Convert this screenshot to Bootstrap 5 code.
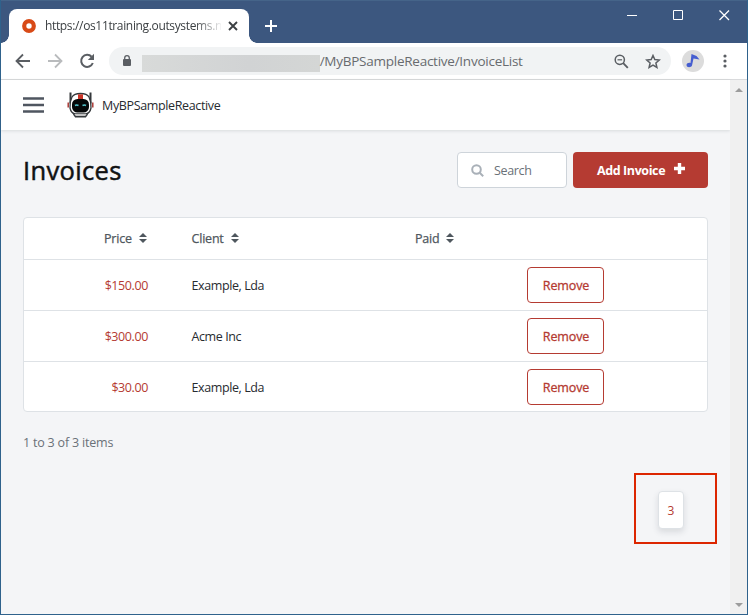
<!DOCTYPE html>
<html lang="en">
<head>
<meta charset="utf-8">
<meta name="viewport" content="width=device-width, initial-scale=1">
<title>Invoices</title>
<link href="https://cdn.jsdelivr.net/npm/bootstrap@5.3.0/dist/css/bootstrap.min.css" rel="stylesheet">
<style>
body{font-family:"Open Sans","Noto Sans",sans-serif;font-size:12.5px;line-height:20px;color:#272b30;overflow:hidden}
svg{display:block;flex:none}
.t{white-space:nowrap;display:block}
.browser{width:748px;height:615px;border:1px solid #2f628c;border-top:0;background:#fff}
.titlebar{height:43px;background:#3c577f;border-top:1px solid #456489;padding-left:8px}
.tab{width:240px;height:34px;margin-top:8px;background:#fff;border-radius:8px 8px 0 0;padding-left:13px}
.tab::before,.tab::after{content:"";position:absolute;bottom:0;width:8px;height:8px}
.tab::before{left:-8px;background:radial-gradient(circle at 0 0,#3c577f 7.5px,#fff 8px)}
.tab::after{right:-8px;background:radial-gradient(circle at 100% 0,#3c577f 7.5px,#fff 8px)}
.tab-title{width:176px;margin-left:9px;font-size:12px;letter-spacing:-.35px;color:#3c4043;-webkit-mask-image:linear-gradient(90deg,#000 150px,transparent 178px)}
.toolbar{height:37px;border-bottom:1px solid #d9dadc;padding:0 16px 0 14px}
.omnibox{width:562px;height:28px;margin-left:14px;border-radius:14px;background:#f1f3f4;padding:0 10px 0 12px}
.redacted{width:178px;height:17px;margin:4px 0 0 10px;background:linear-gradient(90deg,#d8dad9,#d1d3d4 60%,#d4d6d5)}
.path{width:295px;font-size:13.5px;color:#686b6f;letter-spacing:-.25px}
.avatar{width:22px;height:22px;background:#dcdcdc;margin-left:11px}
.page{width:729px;height:534px;background:#f4f5f7}
.app-header{height:50px;background:#fff;padding-left:22px;box-shadow:0 1px 3px rgba(70,80,90,.16)}
.brand-name{margin-left:8px;padding-top:2px;letter-spacing:-.36px}
.scroll{width:17px;height:534px;background:#f0f0f0;padding:8px 0 7px}
.content{padding:22px 22px 0}
h1{font-size:25.5px;line-height:36px;font-weight:500;color:#101213;letter-spacing:.35px;-webkit-text-stroke:.5px #101213}
.search{width:110px;height:36px;border:1px solid #ced4da;border-radius:4px;background:#fff;padding-left:13px;color:#6a7178;letter-spacing:-.35px}
.search .t{margin-left:10px;padding-top:2px}
.add{width:135px;height:36px;background:#b53b32;border-radius:4px;color:#fff;font-weight:700;font-size:12.5px;border:0;padding:1px 0 0 24px;letter-spacing:-.4px}
.add .t{padding-top:1px}
.grid-card{margin-top:29px;border:1px solid #dee2e6;border-radius:4px;background:#fff}
.grid-card table{table-layout:fixed;font-size:12.5px;--bs-table-bg:transparent;color:#272b30}
.grid-card th{height:41px;padding:0;font-weight:500;color:#4f575e;vertical-align:middle;border-color:#dee2e6;letter-spacing:-.2px;-webkit-text-stroke:.25px #4f575e}
.grid-card th .t{padding-top:2px}
.sort{margin-left:7px}
.grid-card td{height:51px;padding:0;vertical-align:middle;border-color:#dee2e6;letter-spacing:-.4px}
.grid-card td .t{padding-top:3px}
.grid-card tr:last-child td{border:0;height:50px;padding-top:1px}
.grid-card tr:last-child td .t{padding-top:2px}
.price{color:#b53b32;width:79px;margin-left:45px;text-align:right}
.remove{display:block;width:77px;height:36px;border:1px solid #b53b32;border-radius:4px;background:#fff;color:#b53b32;font-size:12.5px;line-height:20px;padding:3px 0 0 1px;letter-spacing:-.12px;-webkit-text-stroke:.3px #b53b32}
.counter{margin-top:21px;color:#6a7178;letter-spacing:-.2px}
.frame{width:83px;height:71px;border:2px solid #dc2600;margin:20px -9px 0 0;padding:0 0 0 22px}
.pager{width:26px;height:38px;margin-top:3px;border:1px solid #dee2e6;border-radius:4px;background:#fff;color:#b53b32;box-shadow:0 3px 6px rgba(50,60,70,.14);font-size:12px;padding-top:1px}
</style>
<script src="https://cdn.jsdelivr.net/npm/bootstrap@5.3.0/dist/js/bootstrap.bundle.min.js"></script>
</head>
<body>
<div class="browser">
 <div class="titlebar d-flex">
  <div class="tab position-relative d-flex align-items-center">
   <svg width="14" height="14"><circle cx="7" cy="7" r="4.8" fill="#fff" stroke="#d84a17" stroke-width="4.2"/></svg>
   <div class="tab-title"><span class="t">https://os11training.outsystems.n</span></div>
   <svg width="10" height="10" style="margin-left:7px"><path d="M1 1l8 8M9 1l-8 8" stroke="#3c4043" stroke-width="1.9"/></svg>
  </div>
  <svg width="14" height="14" style="margin:18px 0 0 15px"><path d="M7 1v12M1 7h12" stroke="#fff" stroke-width="2"/></svg>
  <div class="d-flex ms-auto" style="padding:9px 17px 0 0">
   <svg width="103" height="12" fill="none" stroke="#fff"><path d="M0 5.500h10M46.500 .5h9v9h-9z"/><path d="M92.500 .5l9.500 9.500M102 .5l-9.500 9.500" stroke-width="1.300"/></svg>
  </div>
 </div>
 <div class="toolbar d-flex align-items-center">
  <svg width="16" height="16" fill="none" stroke="#5a5e63" stroke-width="1.8"><path d="M15 8H2M8 1.500L1.500 8 8 14.500"/></svg>
  <svg width="16" height="16" class="ms-3" fill="none" stroke="#b9bbbd" stroke-width="1.800"><path d="M1 8h13M8 1.500L14.500 8 8 14.500"/></svg>
  <svg width="16" height="16" class="ms-3"><path d="M12.600 3.800A6 6 0 1 0 13.800 10" fill="none" stroke="#5a5e63" stroke-width="2"/><path d="M15 .8V7H8.800z" fill="#5a5e63"/></svg>
  <div class="omnibox d-flex align-items-center">
   <svg width="10" height="12" style="margin-left:1px"><rect x="1" y="4" width="8" height="7" rx="1" fill="#5a5e63"/><path d="M2.700 5V3a2.300 2.300 0 0 1 4.600 0v2" fill="none" stroke="#5a5e63" stroke-width="1.300"/></svg>
   <div class="redacted"></div>
   <div class="path"><span class="t">/MyBPSampleReactive/InvoiceList</span></div>
   <svg width="15" height="15" fill="none" stroke="#5a5e63"><circle cx="5.800" cy="5.800" r="4.600" stroke-width="1.500"/><path d="M9.200 9.200l4.600 4.600" stroke-width="1.900"/><path d="M3.500 5.800h4.600" stroke-width="1.200"/></svg>
   <svg width="16" height="15" style="margin-left:16px" fill="none" stroke="#5a5e63" stroke-width="1.500"><path d="M8 1.500l1.800 4.100 4.500.4-3.400 3 1 4.400L8 11.100l-3.900 2.300 1-4.400-3.400-3 4.500-.4z"/></svg>
  </div>
  <div class="avatar rounded-circle d-flex align-items-center justify-content-center">
   <svg width="16" height="16"><path d="M6.500 1l5 2 3 3.500-6-1L7 12.500c-.5 2-5.500 2.500-5.500-.5 0-2 2.500-2.500 4-2z" fill="#465ed0"/></svg>
  </div>
  <svg width="4" height="14" class="ms-auto me-1" fill="#5a5e63"><circle cx="2" cy="2" r="1.600"/><circle cx="2" cy="7" r="1.600"/><circle cx="2" cy="12" r="1.600"/></svg>
 </div>
 <div class="d-flex">
  <main class="page">
   <header class="app-header d-flex align-items-center">
    <svg width="21" height="16"><path d="M0 1.500h21M0 8h21M0 14.500h21" stroke="#4f5660" stroke-width="2.600"/></svg>
    <svg width="27" height="26" style="margin-left:23px" viewBox="0 0 27 26">
     <path d="M3.500 .5v11M23.500 .5v11" stroke="#34383b" stroke-width="2"/>
     <path d="M5 5Q7 1.500 13.500 1.500T22 5q2.500 5 2 11-1 5-5 6H8q-4-1-5-6-.500-6 2-11z" fill="#fff" stroke="#34383b" stroke-width="1.300"/>
     <path d="M11 2.300h5v5h-5z" fill="#c93427"/>
     <path d="M1.200 10.500v5M25.800 10.500v5" stroke="#a62e2a" stroke-width="1.400"/>
     <rect x="5" y="7" width="17" height="13.500" rx="5.500" fill="#050708"/>
     <path d="M8 13.500q1.500-1 3.500 0M15.500 13.500q2-1 3.500 0" stroke="#54c5ce" stroke-width="1.600" fill="none"/>
     <path d="M6.500 22l2 2.800h10l2-2.800" fill="#c4c4c4" stroke="#34383b" stroke-width="1.400"/>
    </svg>
    <span class="t brand-name">MyBPSampleReactive</span>
   </header>
   <div class="content">
    <div class="d-flex align-items-center">
     <h1 class="m-0"><span class="t">Invoices</span></h1>
     <div class="search ms-auto d-flex align-items-center">
      <svg width="13" height="13" fill="none" stroke="#a9b0b8" stroke-width="2"><circle cx="5.500" cy="5.500" r="4.300"/><path d="M8.700 8.700l3.500 3.500"/></svg>
      <span class="t">Search</span>
     </div>
     <button class="add btn d-flex align-items-center" style="margin-left:6px"><span class="t">Add Invoice</span><svg width="11" height="11" style="margin:-4px 0 0 9px"><path d="M5.500 0v11M0 5.500h11" stroke="#fff" stroke-width="3.400"/></svg></button>
    </div>
    <div class="grid-card">
     <table class="table mb-0">
      <colgroup><col style="width:80px"><col style="width:87.500px"><col style="width:223.500px"><col style="width:112px"><col></colgroup>
      <thead><tr>
       <th></th>
       <th><div class="d-flex align-items-center"><span class="t">Price</span><svg class="sort" width="8" height="10"><path d="M0 4l4-4 4 4zM0 6h8l-4 4z" fill="#4f575e"/></svg></div></th>
       <th><div class="d-flex align-items-center"><span class="t">Client</span><svg class="sort" width="8" height="10"><path d="M0 4l4-4 4 4zM0 6h8l-4 4z" fill="#4f575e"/></svg></div></th>
       <th><div class="d-flex align-items-center"><span class="t">Paid</span><svg class="sort" width="8" height="10"><path d="M0 4l4-4 4 4zM0 6h8l-4 4z" fill="#4f575e"/></svg></div></th>
       <th></th>
      </tr></thead>
      <tbody>
       <tr><td colspan="2"><span class="t price">$150.00</span></td><td><span class="t">Example, Lda</span></td><td></td><td><button class="remove btn">Remove</button></td></tr>
       <tr><td colspan="2"><span class="t price">$300.00</span></td><td><span class="t">Acme Inc</span></td><td></td><td><button class="remove btn">Remove</button></td></tr>
       <tr><td colspan="2"><span class="t price">$30.00</span></td><td><span class="t">Example, Lda</span></td><td></td><td><button class="remove btn">Remove</button></td></tr>
      </tbody>
     </table>
    </div>
    <div class="counter"><span class="t">1 to 3 of 3 items</span></div>
    <div class="d-flex justify-content-end"><div class="frame d-flex align-items-center"><div class="pager d-flex align-items-center justify-content-center">3</div></div></div>
   </div>
  </main>
  <div class="scroll d-flex flex-column justify-content-between align-items-center">
   <svg width="8" height="4"><path d="M0 4l4-4 4 4z" fill="#9c9c9c"/></svg>
   <svg width="8" height="4"><path d="M0 0h8l-4 4z" fill="#9c9c9c"/></svg>
  </div>
 </div>
</div>
</body>
</html>
